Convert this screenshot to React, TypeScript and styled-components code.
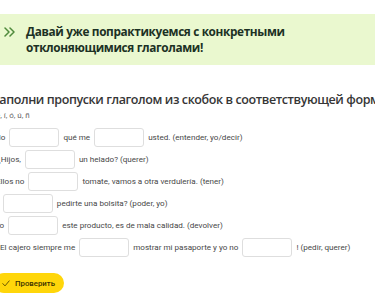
import React from "react";
import styled, { createGlobalStyle } from "styled-components";

const GlobalStyle = createGlobalStyle`
  html, body {
    margin: 0;
    padding: 0;
    background: #ffffff;
    overflow: hidden;
  }
  body {
    width: 375px;
    height: 302px;
  }
`;

type Part = { text?: string; gap?: boolean };
type Sentence = { shift: number; parts: Part[] };

const rows: Sentence[] = [
  { shift: 3, parts: [{ text: "No" }, { gap: true }, { text: "qué me" }, { gap: true }, { text: "usted. (entender, yo/decir)" }] },
  { shift: 5, parts: [{ text: "¿Hijos," }, { gap: true }, { text: "un helado? (querer)" }] },
  { shift: 4, parts: [{ text: "Ellos no" }, { gap: true }, { text: "tomate, vamos a otra verdulería. (tener)" }] },
  { shift: 3, parts: [{ text: "¿" }, { gap: true }, { text: "pedirte una bolsita? (poder, yo)" }] },
  { shift: 3, parts: [{ text: "Yo" }, { gap: true }, { text: "este producto, es de mala calidad. (devolver)" }] },
  {
    shift: 8,
    parts: [
      { text: "El cajero siempre me" },
      { gap: true },
      { text: "mostrar mi pasaporte y yo no" },
      { gap: true },
      { text: "! (pedir, querer)" },
    ],
  },
];

const Chevrons = () => (
  <svg width="11" height="10" viewBox="0 0 11 10" fill="none">
    <path d="M1 1l4 4-4 4M6 1l4 4-4 4" stroke="#4f8a3c" strokeWidth="1.5" strokeLinecap="round" strokeLinejoin="round" />
  </svg>
);

const Check = () => (
  <svg width="8" height="7" viewBox="0 0 8 7" fill="none">
    <path d="M0.8 3.6l2.2 2.3L7.2 0.9" stroke="#5a4a00" strokeWidth="0.9" strokeLinecap="round" strokeLinejoin="round" />
  </svg>
);

export default function App() {
  return (
    <>
      <GlobalStyle />
      <Page>
        <Banner>
          <BannerIcon>
            <Chevrons />
          </BannerIcon>
          <BannerText>
            Давай уже попрактикуемся с конкретными
            <br />
            отклоняющимися глаголами!
          </BannerText>
        </Banner>
        <Exercise>
          <Heading>Заполни пропуски глаголом из скобок в соответствующей форме</Heading>
          <Accents>á, é, í, ó, ú, ñ</Accents>
          <Rows>
            {rows.map((row, i) => (
              <Row key={i} $shift={row.shift}>
                {row.parts.map((p, j) => (p.gap ? <Blank key={j} /> : <Word key={j}>{p.text}</Word>))}
              </Row>
            ))}
          </Rows>
          <CheckButton>
            <Check />
            <span>Проверить</span>
          </CheckButton>
        </Exercise>
      </Page>
    </>
  );
}

const Page = styled.div`
  display: flex;
  flex-direction: column;
  padding-top: 14px;
  width: 375px;
`;

const Banner = styled.div`
  display: flex;
  align-items: flex-start;
  gap: 11px;
  height: 51px;
  box-sizing: border-box;
  padding: 9px 12px 0 4px;
  background: #eaf8cf;
`;

const BannerIcon = styled.div`
  display: flex;
  padding-top: 4px;
`;

const BannerText = styled.div`
  font-family: "Open Sans", sans-serif;
  font-weight: 700;
  font-size: 11.8px;
  line-height: 16px;
  letter-spacing: -0.35px;
  color: #1c3124;
`;

const Exercise = styled.div`
  display: flex;
  flex-direction: column;
  align-items: flex-start;
  margin-left: -8px;
  padding-top: 26px;
  white-space: nowrap;
`;

const Heading = styled.div`
  font-family: "Open Sans", sans-serif;
  font-weight: 600;
  font-size: 12.5px;
  line-height: 18px;
  letter-spacing: -0.4px;
  color: #363636;
`;

const Accents = styled.div`
  margin-left: -4px;
  margin-top: 1px;
  font-family: "Roboto", sans-serif;
  font-size: 8px;
  line-height: 11px;
  color: #666666;
`;

const Rows = styled.div`
  display: flex;
  flex-direction: column;
  gap: 2px;
  margin-top: 6px;
`;

const Row = styled.div<{ $shift: number }>`
  display: flex;
  align-items: center;
  gap: 4px;
  height: 20px;
  margin-left: ${(p) => p.$shift}px;
`;

const Word = styled.span`
  font-family: "Roboto", sans-serif;
  font-size: 8.1px;
  color: #474747;
`;

const Blank = styled.div`
  width: 50px;
  height: 19px;
  box-sizing: border-box;
  border: 1px solid #dedede;
  border-radius: 3px;
  background: #ffffff;
`;

const CheckButton = styled.div`
  display: flex;
  align-items: center;
  gap: 5px;
  margin-top: 16px;
  margin-left: 2px;
  height: 20px;
  padding: 0 9px 0 8px;
  border-radius: 10px;
  background: #ffd60a;
  font-family: "Roboto", sans-serif;
  font-weight: 500;
  font-size: 7.8px;
  color: #3b3200;
`;
